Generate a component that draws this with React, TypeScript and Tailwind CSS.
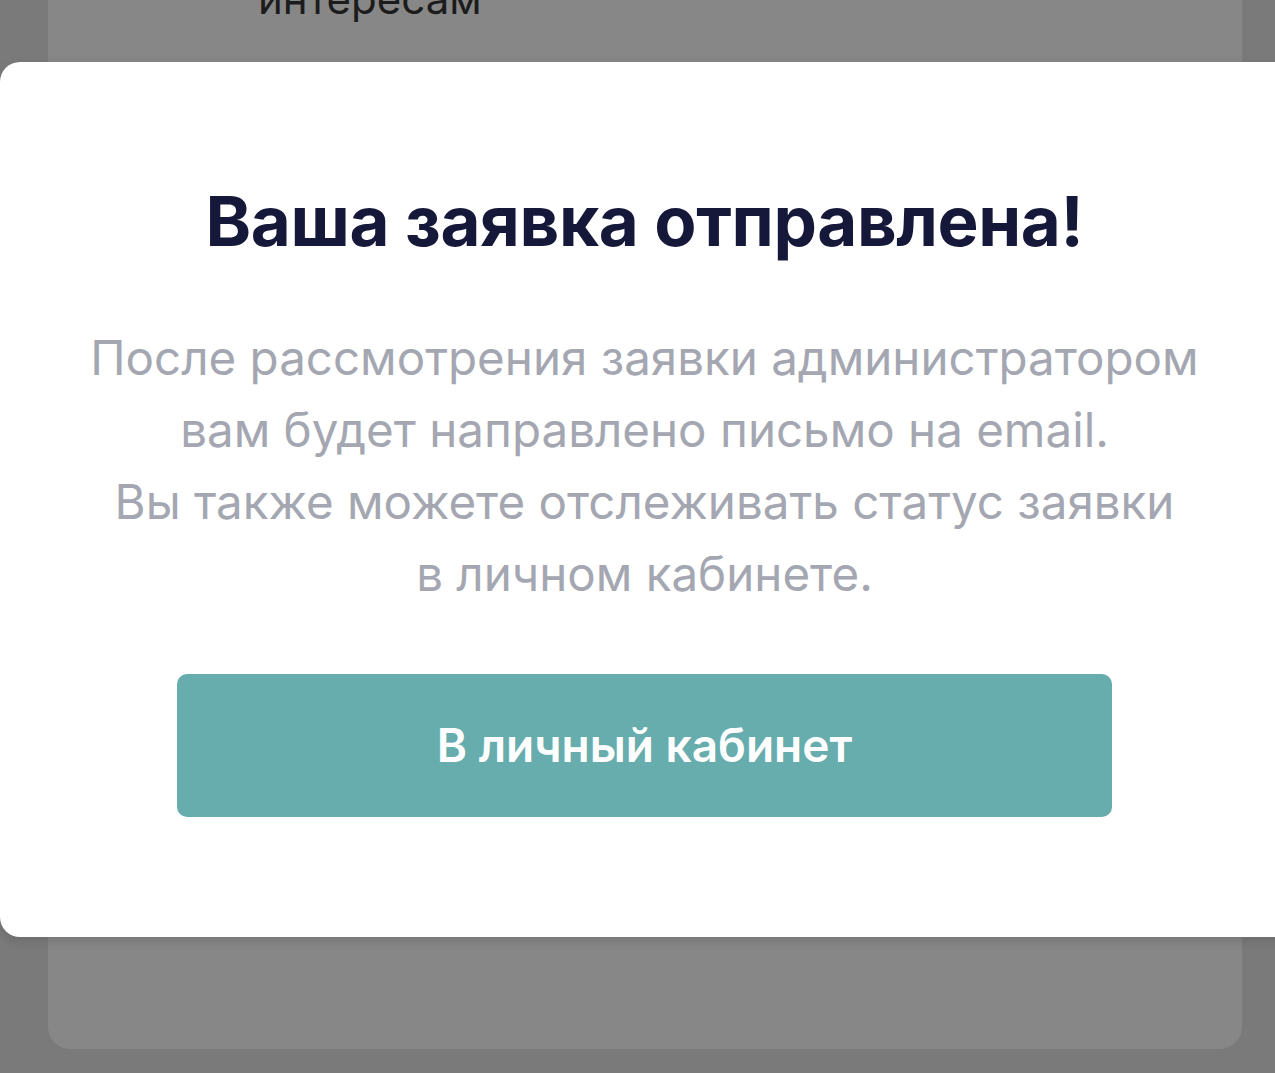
export default function App() {
  return (
    <div
      className="relative h-[1073px] w-full overflow-hidden bg-[#7a7a7a]"
      style={{ fontFamily: "Inter, 'Noto Sans', sans-serif" }}
    >
      {/* page card behind the overlay */}
      <div className="ml-[48px] mr-[33px] flex h-[1049px] flex-col rounded-b-[22px] bg-[#878787]">
        <p className="-mt-[25px] pl-[210px] text-[42px] leading-[48px] text-[#1c1c1c]">интересам</p>
      </div>

      {/* modal */}
      <div className="absolute left-0 top-[62px] flex h-[875px] w-[1289px] flex-col items-center rounded-l-[20px] bg-white shadow-[0_4px_12px_rgba(0,0,0,0.12)]">
        <h1 className="mt-[119px] text-[69px] font-bold leading-[80px] tracking-[-0.4px] text-[#16183a]">
          Ваша заявка отправлена!
        </h1>
        <p className="mt-[61px] text-center text-[47.5px] leading-[72px] text-[#a4a7b1]">
          После рассмотрения заявки администратором
          <br />
          вам будет направлено письмо на email.
          <br />
          Вы также можете отслеживать статус заявки
          <br />
          в личном кабинете.
        </p>
        <button className="mt-[64px] flex h-[143px] w-[935px] items-center justify-center rounded-[10px] bg-[#67adae] text-[46px] font-semibold text-white">
          В личный кабинет
        </button>
      </div>
    </div>
  );
}
